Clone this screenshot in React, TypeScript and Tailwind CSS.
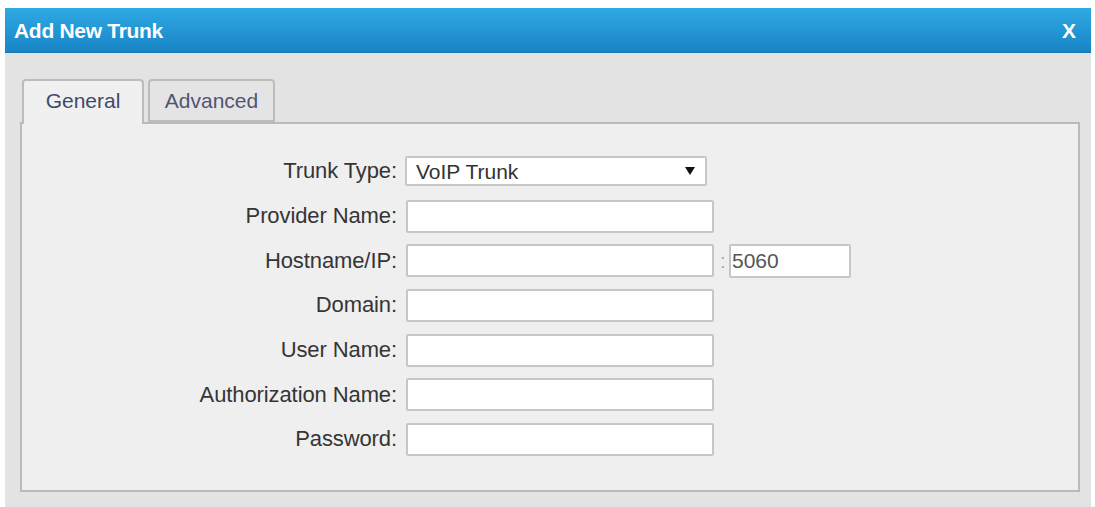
import React from "react";

const rows: { label: string; kind: "select" | "input" | "host" }[] = [
  { label: "Trunk Type:", kind: "select" },
  { label: "Provider Name:", kind: "input" },
  { label: "Hostname/IP:", kind: "host" },
  { label: "Domain:", kind: "input" },
  { label: "User Name:", kind: "input" },
  { label: "Authorization Name:", kind: "input" },
  { label: "Password:", kind: "input" },
];

export default function App() {
  return (
    <div
      className="w-[1095px] h-[507px] bg-white pt-[8px] pl-[5px] overflow-hidden"
      style={{ fontFamily: '"Liberation Sans", Arial, sans-serif' }}
    >
      <div className="w-[1086px] h-[499px] bg-[#e3e3e3] flex flex-col">
        <div className="h-[45px] bg-gradient-to-b from-[#2eaae4] to-[#1984c6] flex items-center justify-between pl-[9px] pr-[15px] border-b border-[#1877b3]">
          <span className="text-white font-bold text-[21px] leading-none tracking-[-0.3px]">Add New Trunk</span>
          <span className="text-white font-bold text-[21px] leading-none">X</span>
        </div>
        <div className="pl-[15px] pr-[10px] pt-[26px]">
          <div className="flex items-end ml-[2px] gap-[4px] relative z-10">
            <div className="w-[122px] h-[45px] bg-[#f0f0f0] border-2 border-b-0 border-[#bcbcbc] rounded-t-[4px] flex items-center justify-center pb-[3px] mb-[-2px] text-[21px] text-[#3d4a6c]">
              General
            </div>
            <div className="w-[127px] h-[43px] bg-[#e4e4e4] border-2 border-[#bcbcbc] rounded-t-[4px] flex items-center justify-center text-[21px] text-[#4f5674]">
              Advanced
            </div>
          </div>
          <div className="w-[1060px] h-[370px] bg-[#efefef] border-2 border-[#bababa] pt-[25px]">
            {rows.map((r) => (
              <div key={r.label} className="h-[44.7px] flex items-center">
                <div className="w-[375px] text-right text-[22px] text-[#353535] leading-none tracking-[-0.1px]">
                  {r.label}
                </div>
                {r.kind === "select" && (
                  <div className="ml-[8px] w-[302px] h-[30px] bg-white border-2 border-[#c6c6c6] rounded-[2px] flex items-center justify-between pl-[9px] pr-[10px]">
                    <span className="text-[21px] text-[#333] leading-none">VoIP Trunk</span>
                    <svg width="10" height="8" viewBox="0 0 10 8">
                      <path d="M0 0 L10 0 L5 8 Z" fill="#111" />
                    </svg>
                  </div>
                )}
                {r.kind === "input" && (
                  <div className="ml-[9px] w-[308px] h-[33px] bg-white border-2 border-[#c6c6c6] rounded-[2px]" />
                )}
                {r.kind === "host" && (
                  <>
                    <div className="ml-[9px] w-[308px] h-[33px] bg-white border-2 border-[#c6c6c6] rounded-[2px]" />
                    <span className="ml-[6px] w-[9px] text-[20px] text-[#aaa] leading-none">:</span>
                    <div className="w-[122px] h-[34px] bg-white border-2 border-[#c6c6c6] rounded-[2px] flex items-center pl-[1px]">
                      <span className="text-[21px] text-[#555] leading-none">5060</span>
                    </div>
                  </>
                )}
              </div>
            ))}
          </div>
        </div>
      </div>
    </div>
  );
}
